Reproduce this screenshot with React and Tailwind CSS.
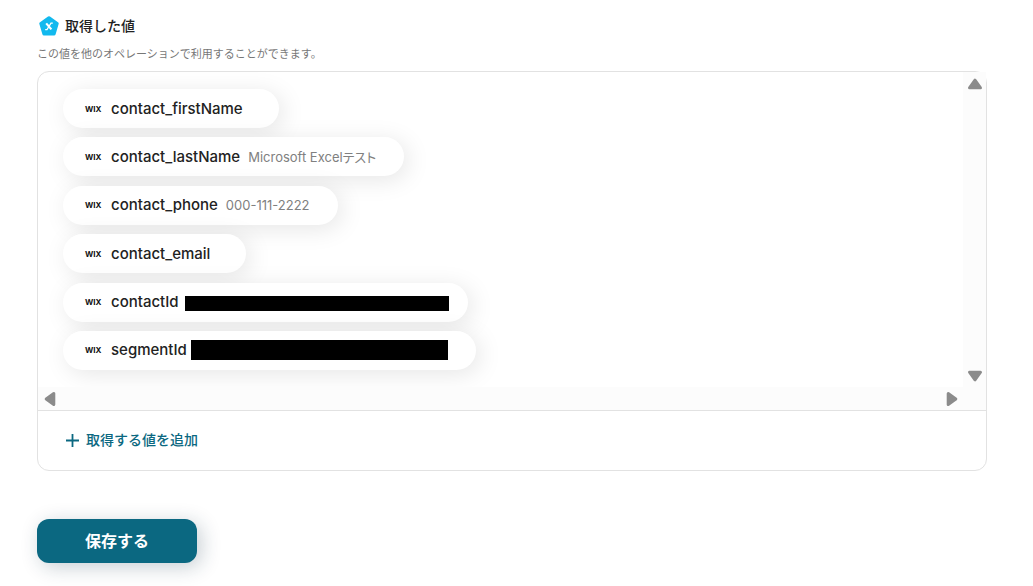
import React from 'react';

const values = [
  { name: 'contact_firstName' },
  { name: 'contact_lastName', sample: 'Microsoft Excelテスト' },
  { name: 'contact_phone', sample: '000-111-2222' },
  { name: 'contact_email' },
  { name: 'contactId', maskBox: 'w-[253px]', mask: '-left-0.5 top-0.5 h-[15px] w-[264px]' },
  { name: 'segmentId', maskBox: 'w-[253px]', mask: '-left-1 -top-0.5 h-5 w-[257px]' },
];

const ScrollArrow = ({ label, turn = '' }) => (
  <button type="button" aria-label={label} className="flex h-[23px] w-[23px] items-center justify-center">
    <svg viewBox="0 0 16 12" className={`h-3 w-4 ${turn}`} fill="#8b8b8b" stroke="#8b8b8b" strokeWidth="3" strokeLinejoin="round">
      <path d="M8 2.2 L13.5 9.8 H2.5 Z" />
    </svg>
  </button>
);

const ValueChip = ({ item }) => (
  <li className="flex h-[39px] items-center rounded-full bg-white pl-[22px] pr-7 shadow-[4px_4px_24px_rgba(0,0,0,0.1)]">
    <span className="w-[26px] text-[8px] font-bold text-[#111111]">WIX</span>
    <span className="text-[15px] leading-5 font-medium text-[#222222]">{item.name}</span>
    <span className="ml-2 text-[13px] leading-5 text-[#808080] [font-feature-settings:'palt']">{item.sample}</span>
    {item.mask && (
      <span className={`relative h-4 ${item.maskBox}`}>
        <span className={`absolute bg-black ${item.mask}`} />
      </span>
    )}
  </li>
);

const App = () => {
  return (
    <main className="min-h-screen bg-white pt-4 pr-[46px] pb-6 pl-[37px] font-['Inter','Noto_Sans_CJK_JP',sans-serif] text-[#222222]">
      <header>
        <h2 className="flex items-center gap-1 text-[14px] leading-5 font-medium">
          <span className="flex w-6 justify-center">
            <svg viewBox="0 0 20 20" className="h-5 w-5">
              <path
                d="M10 2 L18 7.6 L15 17.8 H5 L2 7.6 Z"
                fill="#12b9ee"
                stroke="#12b9ee"
                strokeWidth="3.4"
                strokeLinejoin="round"
              />
              <path d="M7.2 7.4 L12.4 13.4" fill="none" stroke="white" strokeWidth="2.2" />
              <path d="M6.2 13.6 H8 L12 7.2 H13.8" fill="none" stroke="white" strokeWidth="1.2" />
            </svg>
          </span>
          取得した値
        </h2>
        <p className="mt-2 text-[11px] leading-5 text-[#777777]">この値を他のオペレーションで利用することができます。</p>
      </header>

      <section className="mt-[7px] rounded-xl border border-[#e2e2e2]">
        <div className="grid grid-cols-[1fr_23px] border-b border-[#e2e2e2]">
          <ul className="flex h-[315px] flex-col items-start justify-between overflow-hidden rounded-tl-xl px-[25px] py-[17px]">
            {values.map((item) => (
              <ValueChip key={item.name} item={item} />
            ))}
          </ul>
          <div className="flex flex-col justify-between bg-[#fcfcfc]">
            <ScrollArrow label="上へスクロール" />
            <ScrollArrow label="下へスクロール" turn="rotate-180" />
          </div>
          <div className="flex justify-between bg-[#fcfcfc]">
            <ScrollArrow label="左へスクロール" turn="-rotate-90" />
            <ScrollArrow label="右へスクロール" turn="rotate-90" />
          </div>
          <div className="bg-[#fcfcfc]" />
        </div>
        <div className="px-7 pt-[19px] pb-5">
          <button type="button" className="flex items-center gap-[7px] text-[14px] leading-5 font-medium text-[#0b6881]">
            <svg viewBox="0 0 13 13" className="h-[13px] w-[13px]" fill="none" stroke="currentColor" strokeWidth="1.8">
              <path d="M6.5 0 V13 M0 6.5 H13" />
            </svg>
            取得する値を追加
          </button>
        </div>
      </section>

      <button
        type="button"
        className="mt-12 h-11 w-40 rounded-xl bg-[#0b6881] text-[16px] font-bold text-white shadow-[4px_4px_20px_rgba(20,50,70,0.24)]"
      >
        保存する
      </button>
    </main>
  );
};

export default App;
